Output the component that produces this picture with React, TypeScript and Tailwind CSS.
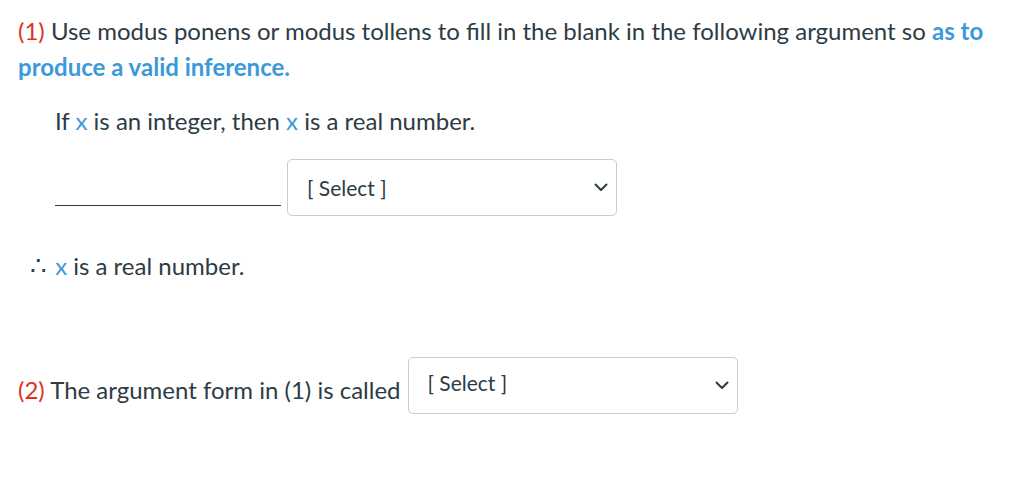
import React from 'react';

const Chevron: React.FC = () => (
    <svg width="14" height="9" viewBox="0 0 14 9" fill="none">
        <path d="M1.5 1.5 L7 7 L12.5 1.5" stroke="#2d3b45" strokeWidth="2" strokeLinecap="round" strokeLinejoin="round" />
    </svg>
);

const SelectBox: React.FC<{ className?: string; textClass?: string }> = ({ className, textClass }) => (
    <div className={`flex h-[57px] w-[330px] shrink-0 items-center justify-between rounded-[5px] border border-[#c7cdd1] bg-white pl-[19px] pr-[8px] ${className}`}>
        <span className={`text-[21px] leading-[24px] text-[#2d3b45] ${textClass}`}>[ Select ]</span>
        <Chevron />
    </div>
);

export default function App() {
    return (
        <div className="min-h-[482px] bg-white px-[18px] pt-[13px] font-['Lato',sans-serif] text-[24px] leading-[36px] text-[#2d3b45]">
            <p>
                <span className="text-[#e0301e]">(1)</span> Use modus ponens or modus tollens to fill in the blank in the following argument so{' '}
                <span className="font-bold text-[#3b99d9]">as to produce a valid inference.</span>
            </p>

            <p className="mt-[18px] pl-[37px]">
                If <span className="text-[#3b99d9]">x</span> is an integer, then <span className="text-[#3b99d9]">x</span> is a real number.
            </p>

            <div className="mt-[20px] flex items-start pl-[37px]">
                <div className="mt-[46px] h-[1px] w-[226px] bg-[#2d3b45]" />
                <SelectBox className="ml-[6px]" />
            </div>

            <p className="mt-[31px] pl-[12px]">
                <span className="mr-[2px] text-[26px]">∴</span> <span className="text-[#3b99d9]">x</span> is a real number.
            </p>

            <div className="mt-[73px] flex items-start">
                <span className="mt-[15px]">
                    <span className="text-[#e0301e]">(2)</span> The argument form in (1) is called
                </span>
                <SelectBox className="ml-[7px]" textClass="mb-[6px]" />
            </div>
        </div>
    );
}
